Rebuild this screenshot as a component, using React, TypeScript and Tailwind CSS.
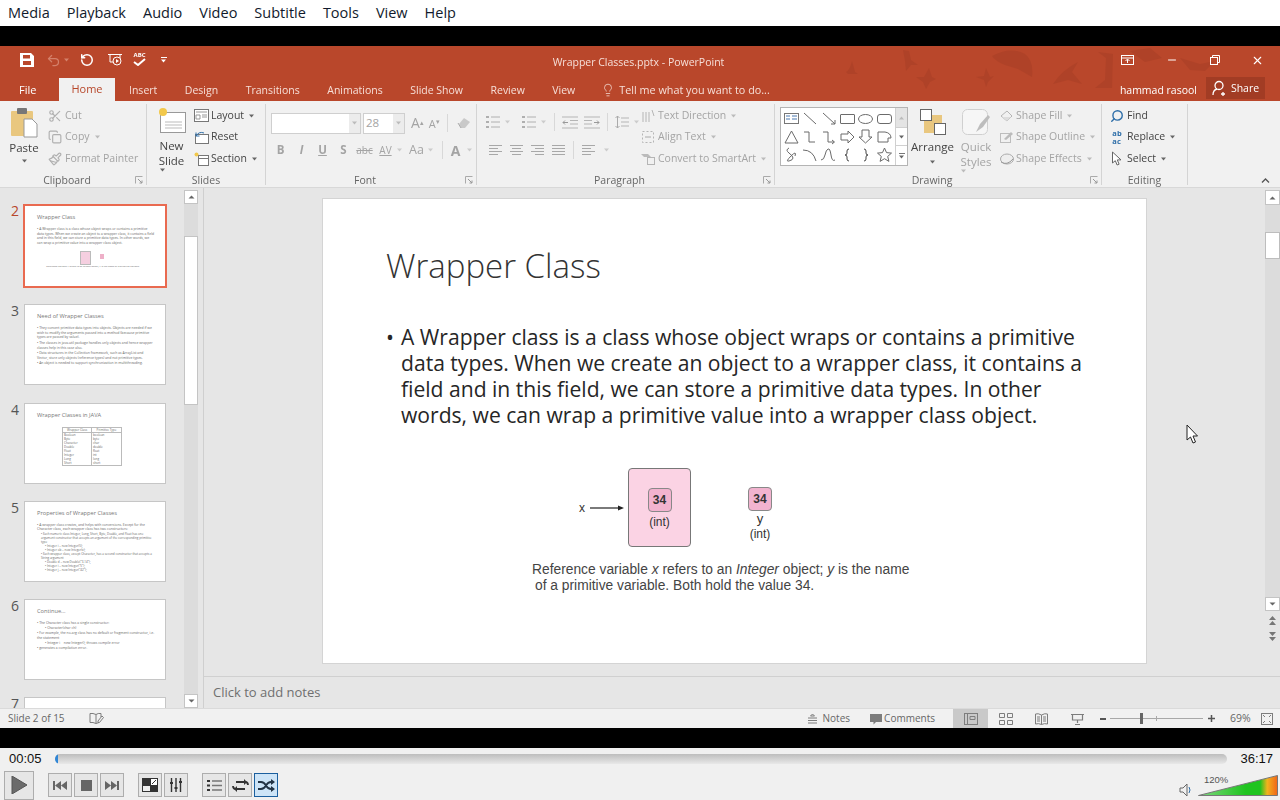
import type { ReactNode } from 'react';
import { Copy, Lightbulb, Paintbrush, RotateCcw, Scissors, Undo2, X, Minus, Search } from 'lucide-react';

const segoe = '[font-family:"Open_Sans","Noto_Sans",sans-serif]';

function Svg({ w, h, children, className = '' }: { w: number; h: number; children: ReactNode; className?: string }) {
    return (
        <svg width={w} height={h} viewBox={`0 0 ${w} ${h}`} fill="none" className={`shrink-0 ${className}`}>
            {children}
        </svg>
    );
}

function Caret({ color = '#888' }: { color?: string }) {
    return (
        <Svg w={7} h={4}>
            <path d="M1 0.5h5L3.5 3.5z" fill={color} />
        </Svg>
    );
}

function Launcher() {
    return (
        <Svg w={8} h={8} className="absolute right-[3px] top-[1px]">
            <path d="M0.5 7.5V0.5H7.5" stroke="#aaa" />
            <path d="M3 3l4 4M7 4.5V7H4.5" stroke="#999" />
        </Svg>
    );
}

function Group({ className, label, launcher, children }: { className: string; label: string; launcher?: boolean; children: ReactNode }) {
    return (
        <div className={`flex flex-col shrink-0 h-[81px] border-r border-[#d4d4d4] ${className}`}>
            <div className="flex-1 min-h-0 relative flex">{children}</div>
            <div className={`relative h-[10px] flex items-center justify-center text-[10.5px] leading-none text-[#666] ${launcher ? 'pr-[12px]' : ''}`}>
                {label}
                {launcher && <Launcher />}
            </div>
        </div>
    );
}

function SmallRow({ icon, label, caret, dim = true }: { icon: ReactNode; label: string; caret?: boolean; dim?: boolean }) {
    return (
        <div className={`flex items-center gap-[2px] h-[21.5px] text-[10.5px] whitespace-nowrap ${dim ? 'text-[#a4a4a4]' : 'text-[#444]'}`}>
            <span className="w-[16px] h-[16px] flex items-center justify-center">{icon}</span>
            {label}
            {caret && <span className="ml-[2px]"><Caret color={dim ? '#bbb' : '#666'} /></span>}
        </div>
    );
}

function Lines({ w = 14, rows = 4, color = '#a8a8a8', align = 'left' }: { w?: number; rows?: number; color?: string; align?: 'left' | 'center' | 'right' | 'full' }) {
    const ys = Array.from({ length: rows }, (_, i) => 1.5 + i * 3);
    return (
        <Svg w={w} h={rows * 3}>
            {ys.map((y, i) => {
                const short = align !== 'full' && i % 2 === 1 ? 4 : 0;
                const x1 = align === 'center' ? short / 2 : align === 'right' ? short : 0;
                return <path key={y} d={`M${x1} ${y}H${x1 + w - short}`} stroke={color} />;
            })}
        </Svg>
    );
}

function ListIcon() {
    return (
        <Svg w={14} h={14}>
            <path d="M0 2h3M0 7h3M0 12h3" stroke="#999" strokeWidth="1.500" />
            <path d="M5 2h9M5 7h9M5 12h9" stroke="#b0b0b0" />
        </Svg>
    );
}

function IndentIcon({ flip }: { flip?: boolean }) {
    return (
        <Svg w={16} h={13} className={flip ? '-scale-x-100' : ''}>
            <path d="M0 1h16M8 4.500h8M8 8h8M0 12h16" stroke="#b5b5b5" />
            <path d="M1 6.500h5M3 4.500l-2 2 2 2" stroke="#999" />
        </Svg>
    );
}

function FontRibbon() {
    const row2 = ['B', 'I', 'U', 'S', 'abc'];
    return (
        <div className="flex flex-col text-[#a4a4a4] pl-[5px] pt-[8px]">
            <div className="flex items-center h-[22px]">
                <div className="w-[90px] h-[21px] bg-white border border-[#cfcfcf] flex justify-end">
                    <div className="w-[11px] bg-[#ececec] flex items-center justify-center"><Caret color="#bbb" /></div>
                </div>
                <div className="ml-[2px] w-[42px] h-[21px] bg-white border border-[#cfcfcf] flex justify-between items-center pl-[2px] text-[11.5px]">
                    28
                    <div className="w-[11px] h-full bg-[#ececec] flex items-center justify-center"><Caret color="#bbb" /></div>
                </div>
                <span className="ml-[6px] text-[14px] leading-none">A<sup className="text-[7px]">▴</sup></span>
                <span className="ml-[5px] text-[11px] leading-none">A<sup className="text-[7px]">▾</sup></span>
                <div className="w-px h-[18px] bg-[#d8d8d8] ml-[7px]" />
                <Svg w={16} h={14} className="ml-[8px]">
                    <path d="M3 8l5-6 6 4-5 6H5z" fill="#c9c9c9" />
                    <path d="M2 7l3 5" stroke="#aaa" />
                </Svg>
            </div>
            <div className="flex items-center h-[22px] mt-[5px] text-[11.5px] font-bold -ml-[1px]">
                {row2.map((t) => (
                    <span key={t} className={`w-[21px] text-center ${t === 'I' ? 'italic' : ''} ${t === 'U' ? 'underline' : ''} ${t === 'abc' ? 'line-through font-normal text-[10px]' : ''}`}>{t}</span>
                ))}
                <span className="w-[21px] text-center font-normal text-[10px] underline">AV</span>
                <Caret color="#ccc" />
                <span className="ml-[6px] font-normal text-[12.5px]">Aa</span>
                <span className="ml-[3px]"><Caret color="#ccc" /></span>
                <div className="w-px h-[18px] bg-[#d8d8d8] ml-[8px]" />
                <span className="ml-[8px] text-[14px]">A</span>
                <span className="ml-[5px]"><Caret color="#ccc" /></span>
            </div>
        </div>
    );
}

function ParagraphRibbon() {
    return (
        <div className="flex pl-[9px] pt-[7px]">
            <div className="flex flex-col w-[154px] shrink-0">
                <div className="flex items-center h-[22px] gap-[4px]">
                    <ListIcon />
                    <Caret color="#ccc" />
                    <span className="ml-[7px]"><ListIcon /></span>
                    <Caret color="#ccc" />
                    <div className="w-px h-[18px] bg-[#d8d8d8] mx-[3px]" />
                    <IndentIcon />
                    <span className="ml-[2px]"><IndentIcon flip /></span>
                    <div className="w-px h-[18px] bg-[#d8d8d8] mx-[3px]" />
                    <Svg w={14} h={14}>
                        <path d="M2.500 1v12M.5 3l2-2 2 2M.5 11l2 2 2-2" stroke="#aaa" />
                        <path d="M6 3h8M6 7h8M6 11h8" stroke="#b5b5b5" />
                    </Svg>
                    <Caret color="#ccc" />
                </div>
                <div className="flex items-center h-[22px] mt-[6px] gap-[8px] pl-[3px]">
                    <Lines w={13} align="left" />
                    <Lines w={13} align="center" />
                    <Lines w={13} align="right" />
                    <Lines w={13} align="full" />
                    <div className="w-px h-[18px] bg-[#d8d8d8]" />
                    <Lines w={13} />
                    <Caret color="#ccc" />
                </div>
            </div>
            <div className="flex flex-col -mt-[6px]">
                <SmallRow icon={<Svg w={14} h={14}><path d="M2 3v10M5 3v10M8 3v10M11 1l2 6" stroke="#b5b5b5" /></Svg>} label="Text Direction" caret />
                <SmallRow icon={<Svg w={14} h={14}><rect x="1.500" y="1.500" width="11" height="11" stroke="#b5b5b5" strokeDasharray="2 2" /><path d="M4 7h6" stroke="#aaa" /></Svg>} label="Align Text" caret />
                <SmallRow icon={<Svg w={16} h={14}><path d="M1 2h7l3 3H4z" fill="#bbb" /><rect x="7.500" y="5.500" width="7" height="7" stroke="#b5b5b5" /></Svg>} label="Convert to SmartArt" caret />
            </div>
        </div>
    );
}

function ShapeIcon({ n }: { n: number }) {
    const s = '#6b6b6b';
    const shapes: ReactNode[] = [
        <g key="a"><rect x="1.500" y="3.500" width="14" height="10" stroke="#777" /><path d="M3 6h4M3 9h4M9 6h5M9 9h5" stroke="#4a78b0" /></g>,
        <path key="b" d="M3 3l12 11" stroke={s} />,
        <path key="c" d="M3 3l12 11M15 10v4h-4" stroke={s} />,
        <rect key="d" x="1.500" y="4.500" width="14" height="9" rx="0.5" stroke={s} />,
        <ellipse key="e" cx="8.500" cy="9" rx="7" ry="4.500" stroke={s} />,
        <rect key="f" x="1.500" y="4.500" width="14" height="9" rx="2.500" stroke={s} />,
        <path key="g" d="M8.500 3L15 15H2z" stroke={s} />,
        <path key="h" d="M3 4h5v10h6" stroke={s} />,
        <path key="i" d="M3 4h5v10h6M12 12l2.500 2-2.500 2" stroke={s} />,
        <path key="j" d="M2 6h7V3l6 6-6 6v-3H2z" stroke={s} />,
        <path key="k" d="M5 2h7v7h3l-6.500 6L2 9h3z" stroke={s} />,
        <path key="l" d="M2 14V4h7q6 1 6 6h-3v4z" stroke={s} />,
        <path key="m" d="M6 2q-4 2 0 5t4 5-4 3 2-5 4 0" stroke={s} />,
        <path key="n" d="M2 4q10 0 13 11" stroke={s} />,
        <path key="o" d="M1 14q3 0 4-5t3-6 3 6 4 5" stroke={s} />,
        <path key="p" d="M10 3q-2 0-2 2v2q0 2-2 2 2 0 2 2v2q0 2 2 2" stroke="#444" />,
        <path key="q" d="M7 3q2 0 2 2v2q0 2 2 2-2 0-2 2v2q0 2-2 2" stroke="#444" />,
        <path key="r" d="M8.500 2l2 4.600 5 .5-3.800 3.300 1.200 5-4.400-2.700-4.400 2.700 1.200-5L1.500 7.100l5-.5z" stroke={s} />,
    ];
    return <Svg w={17} h={17}>{shapes[n]}</Svg>;
}

function DrawingRibbon() {
    return (
        <div className="flex pl-[5px] pt-[3px]">
            <div className="w-[128px] h-[59px] bg-white border border-[#b4b4b4] flex shrink-0">
                <div className="grid grid-cols-6 flex-1 items-center justify-items-center px-[1px] py-[1px]">
                    {Array.from({ length: 18 }, (_, i) => <ShapeIcon key={i} n={i} />)}
                </div>
                <div className="w-[12px] flex flex-col border-l border-[#d0d0d0]">
                    <div className="h-[19px] bg-[#e4e4e4] flex items-center justify-center"><Svg w={7} h={4}><path d="M1 3.500h5L3.500 .5z" fill="#bbb" /></Svg></div>
                    <div className="h-[19px] flex items-center justify-center border-y border-[#d0d0d0]"><Caret color="#666" /></div>
                    <div className="flex-1 flex flex-col gap-[1px] items-center justify-center"><div className="w-[6px] h-px bg-[#777]" /><Caret color="#666" /></div>
                </div>
            </div>
            <div className="w-[48px] flex flex-col items-center text-[11.5px] leading-[15px] text-[#444] pl-[1px]">
                <Svg w={28} h={28} className="mt-[1px]">
                    <rect x="5" y="7" width="18" height="18" fill="#e9c77f" />
                    <rect x="1.500" y="1.500" width="11" height="11" fill="#fff" stroke="#666" />
                    <rect x="15.500" y="15.500" width="11" height="11" fill="#fff" stroke="#666" />
                </Svg>
                <span className="mt-[3px]">Arrange</span>
                <span className="mt-[6px]"><Caret color="#666" /></span>
            </div>
            <div className="w-[40px] flex flex-col items-center text-[11.5px] leading-[15px] text-[#a4a4a4]">
                <Svg w={30} h={28} className="mt-[1px]">
                    <rect x="1.500" y="1.500" width="25" height="25" rx="5" stroke="#d0d0d0" fill="#f6f6f6" />
                    <path d="M15 24l4-8 8-9 2 2-7 10z" fill="#bdbdbd" />
                </Svg>
                <span className="mt-[3px]">Quick</span>
                <span className="whitespace-nowrap">Styles <Caret color="#bbb" /></span>
            </div>
            <div className="flex flex-col -mt-[2px] ml-[2px]">
                <SmallRow icon={<Svg w={15} h={14}><path d="M2 7l6-5 5 5-5 5z" stroke="#b5b5b5" /><path d="M3 8h9l-4 4z" fill="#ddd" /></Svg>} label="Shape Fill" caret />
                <SmallRow icon={<Svg w={15} h={14}><rect x="1.500" y="3.500" width="10" height="9" stroke="#bdbdbd" /><path d="M5 9l7-7 2 2-7 6z" fill="#bbb" /></Svg>} label="Shape Outline" caret />
                <SmallRow icon={<Svg w={15} h={14}><ellipse cx="8" cy="7" rx="6.500" ry="5" fill="#eee" stroke="#aaa" /><path d="M2 10q6 4 12-3" stroke="#999" /></Svg>} label="Shape Effects" caret />
            </div>
        </div>
    );
}

function EditingRibbon() {
    return (
        <div className="flex flex-col pl-[7px] pt-[1px]">
            <SmallRow dim={false} icon={<Search size={14} color="#2e6ea8" strokeWidth={2.4} className="-scale-x-100" />} label="Find" />
            <SmallRow
                dim={false}
                icon={<span className="text-[7.500px] leading-[8px] font-bold text-[#2e6ea8]">ab<br />ac</span>}
                label="Replace"
                caret
            />
            <SmallRow
                dim={false}
                icon={<Svg w={12} h={15}><path d="M1.500 1v11l2.800-2.300 1.800 4.300 2-.8-1.800-4.300h3.700z" stroke="#666" fill="#fff" /></Svg>}
                label="Select"
                caret
            />
        </div>
    );
}

function Birds() {
    const blobs = [
        'M846 26Q850 24 852 15Q854 22 855 26L858 28H848Z',
        'M903 4L909 5L911 14L918 19L911 19L906 25L905 15Z',
        'M916 31L924 31L929 22L932 31L936 33L930 36L926 43L923 36Z',
        'M976 31L984 30L986 22L990 31L994 30L988 36L986 41L984 34Z',
        'M992 10Q1010 0 1025 8Q1034 15 1032 31L1018 23L1005 19Q995 15 992 10Z',
        'M1053 38Q1062 24 1078 16L1072 26L1082 38L1068 34Z',
        'M1095 42L1105 34L1106 12L1098 6L1113 8L1112 42Z',
        'M1180 12L1200 18L1215 15L1205 25L1190 24Z',
        'M1130 5L1150 2L1162 12L1145 16Z',
    ];
    return (
        <svg className="absolute inset-0 pointer-events-none" width="1280" height="55">
            {blobs.map((d) => <path key={d} d={d} fill="#a83f26" opacity="0.6" />)}
        </svg>
    );
}

function TitleBar() {
    const tabs = ['Insert', 'Design', 'Transitions', 'Animations', 'Slide Show', 'Review', 'View'];
    return (
        <div className="relative h-[55px] bg-[#b9472b] text-[#f6dfd8]">
            <Birds />
            <div className="relative h-[32px] flex items-center">
                <Svg w={14} h={14} className="ml-[20px] mb-[4px]">
                    <path fillRule="evenodd" d="M0 0h11l3 3v11H0zM3 2v3.500h7V2zM3 8v4h8V8z" fill="#fff" />
                </Svg>
                <Undo2 size={15} color="#d4816b" className="ml-[12px] mb-[4px]" />
                <span className="ml-[2px] mb-[4px]"><Caret color="#d4816b" /></span>
                <RotateCcw size={14} color="#fff" strokeWidth={2.6} className="ml-[10px] mb-[4px]" />
                <Svg w={16} h={16} className="ml-[13px] mb-[4px]">
                    <path d="M1 2.500h14M3 3v7h10V3" stroke="#fff" />
                    <circle cx="10" cy="9" r="4" stroke="#fff" fill="#b7462b" />
                    <path d="M9 7l3 2-3 2z" fill="#fff" />
                </Svg>
                <span className="ml-[10px] mb-[6px] flex flex-col items-center text-[6px] leading-[6px] font-bold text-white">
                    ABC
                    <Svg w={13} h={8}><path d="M1 4l4 3 7-6" stroke="#fff" strokeWidth="2" /></Svg>
                </span>
                <span className="ml-[14px] mb-[4px] flex flex-col items-center gap-[1px]">
                    <span className="w-[6px] h-px bg-white" />
                    <Caret color="#fff" />
                </span>
                <span className="flex-1 text-center text-[10.5px] pr-[11px] pt-[2px]">Wrapper Classes.pptx - PowerPoint</span>
                <Svg w={13} h={10} className="mr-[32px] mb-[4px]">
                    <rect x=".5" y=".5" width="12" height="9" stroke="#fff" />
                    <path d="M.5 3h12M6.500 8V4.500M4.500 6l2-2 2 2" stroke="#fff" />
                </Svg>
                <Minus size={12} color="#fff" className="mr-[32px] mb-[4px]" />
                <Svg w={10} h={10} className="mr-[31px] mb-[4px]">
                    <rect x=".5" y="2.500" width="7" height="7" stroke="#fff" />
                    <path d="M2.500 2V.5h7v7H8" stroke="#fff" />
                </Svg>
                <X size={13} color="#fff" className="mr-[16px] mb-[4px]" />
            </div>
            <div className="relative h-[23px] flex items-end text-[10.5px] leading-[22px]">
                <span className="w-[59px] pl-[19px] text-white text-[11px]">File</span>
                <span className="w-[56px] h-[23px] bg-[#f1f1f1] text-[#b7472a] text-center text-[11px]">Home</span>
                <div className="ml-[14px] flex gap-[27.500px]">
                    {tabs.map((t) => <span key={t}>{t}</span>)}
                </div>
                <Lightbulb size={14} strokeWidth={1.3} className="ml-[26px] mb-[4px]" />
                <span className="ml-[4px] text-[10.8px]">Tell me what you want to do...</span>
                <span className="ml-auto text-white">hammad rasool</span>
                <span className="ml-[9px] mr-[15px] w-[59px] h-[22px] bg-[#a23c24] flex items-center justify-center gap-[3px] text-white mb-[2px]">
                    <Svg w={16} h={16}>
                        <circle cx="7" cy="5.500" r="4" stroke="#fff" strokeWidth="1.300" />
                        <path d="M1 15q0-5 4-6M11 12v4M9 14h4" stroke="#fff" strokeWidth="1.300" />
                    </Svg>
                    Share
                </span>
            </div>
        </div>
    );
}

function Ribbon() {
    return (
        <div className="relative h-[87px] bg-[#f1f1f1] border-b border-[#d8d8d8] flex items-start pt-[3px]">
            <Group className="w-[147px]" label="Clipboard" launcher>
                <div className="w-[47px] flex flex-col items-center pt-[4px] pl-[1px] text-[11.5px] text-[#444]">
                    <Svg w={28} h={30}>
                        <rect x="1" y="3" width="22" height="25" rx="1" fill="#e9c77f" />
                        <rect x="7" y="0" width="10" height="6" rx="1" fill="#777" />
                        <path d="M14 11h8l5 5v13H14z" fill="#fff" stroke="#999" />
                    </Svg>
                    <span className="mt-[2px] leading-[15px]">Paste</span>
                    <span className="mt-[4px]"><Caret color="#666" /></span>
                </div>
                <div className="flex flex-col pt-[1px]">
                    <SmallRow icon={<Scissors size={14} color="#b0b0b0" />} label="Cut" />
                    <SmallRow icon={<Copy size={14} color="#b0b0b0" />} label="Copy" caret />
                    <SmallRow icon={<Paintbrush size={14} color="#b0b0b0" />} label="Format Painter" />
                </div>
            </Group>
            <Group className="w-[119px]" label="Slides">
                <div className="w-[46px] flex flex-col items-center pt-[3px] text-[11.5px] leading-[15px] text-[#444] pl-[3px]">
                    <Svg w={28} h={26}>
                        <rect x="2.500" y="5.500" width="25" height="20" fill="#fff" stroke="#999" />
                        <path d="M7 15h17M7 18h17M7 21h17" stroke="#bbb" />
                        <circle cx="5" cy="5" r="4" fill="#f2c84b" />
                    </Svg>
                    <span className="mt-[5px]">New</span>
                    <span className="whitespace-nowrap">Slide <Caret color="#666" /></span>
                </div>
                <div className="flex flex-col pt-[1px]">
                    <SmallRow dim={false} icon={<Svg w={15} h={13}><rect x=".5" y=".5" width="14" height="12" fill="#fff" stroke="#777" /><path d="M2 3h11M2 6h4v4H2zM8 6h5M8 8h5" stroke="#999" /></Svg>} label="Layout" caret />
                    <SmallRow dim={false} icon={<Svg w={15} h={13}><rect x="1.500" y="3.500" width="13" height="9" fill="#fff" stroke="#777" /><path d="M2 5q3-5 8-3M2 1.500V5h3.500" stroke="#2e6ea8" /></Svg>} label="Reset" />
                    <SmallRow dim={false} icon={<Svg w={15} h={14}><rect x="4.500" y="3.500" width="10" height="10" fill="#fff" stroke="#777" /><path d="M4.500 6.500h10" stroke="#777" /><circle cx="2.500" cy="2.500" r="2" fill="#f2c84b" /></Svg>} label="Section" caret />
                </div>
            </Group>
            <Group className="w-[211px]" label="Font" launcher><FontRibbon /></Group>
            <Group className="w-[298px]" label="Paragraph" launcher><ParagraphRibbon /></Group>
            <Group className="w-[327px]" label="Drawing" launcher><DrawingRibbon /></Group>
            <Group className="w-[86px]" label="Editing"><EditingRibbon /></Group>
            <Svg w={9} h={5} className="absolute right-[10px] bottom-[4px]">
                <path d="M1 4.500l3.500-3.500 3.500 3.500" stroke="#555" strokeWidth="1.300" />
            </Svg>
        </div>
    );
}

function ArrowBtn({ up, className = '' }: { up?: boolean; className?: string }) {
    return (
        <div className={`bg-white border border-[#c4c4c4] flex items-center justify-center ${className}`}>
            <Svg w={7} h={4}><path d={up ? 'M0.500 3.500h6L3.500 .5z' : 'M0.500 .5h6L3.500 3.500z'} fill="#666" /></Svg>
        </div>
    );
}

function Tiny({ title, children }: { title: string; children: ReactNode }) {
    return (
        <div className="h-full pl-[12px] pr-[10px] pt-[7px] text-[#666] [font-family:'Open_Sans',sans-serif]">
            <div className="text-[5.700px] leading-[8px] text-[#777]">{title}</div>
            <div className="mt-[6px] text-[3.400px] leading-[4.600px]">{children}</div>
        </div>
    );
}

function Thumb({ n, selected, children }: { n: number; selected?: boolean; children?: ReactNode }) {
    return (
        <div className={`flex items-start shrink-0 ${selected ? '-mb-[1px]' : ''}`}>
            <span className={`w-[24px] pl-[11px] text-[14px] leading-[15px] -mt-[1px] ${selected ? 'text-[#b7472a]' : 'text-[#555]'}`}>{n}</span>
            {selected ? (
                <div className="-ml-[1px] w-[144px] h-[84px] bg-white border-[2.500px] border-[#e96a50] overflow-hidden">{children}</div>
            ) : (
                <div className="w-[142px] h-[81px] bg-white border border-[#c6c6c6] overflow-hidden">{children}</div>
            )}
        </div>
    );
}

function ThumbList() {
    const rows = [['Boolean', 'boolean'], ['Byte', 'byte'], ['Character', 'char'], ['Double', 'double'], ['Float', 'float'], ['Integer', 'int'], ['Long', 'long'], ['Short', 'short']];
    return (
        <div className="flex-1 flex flex-col gap-[17.300px] pt-[16px] overflow-hidden">
            <Thumb n={2} selected>
                <Tiny title="Wrapper Class">
                    <p>• A Wrapper class is a class whose object wraps or contains a primitive data types. When we create an object to a wrapper class, it contains a field and in this field, we can store a primitive data types. In other words, we can wrap a primitive value into a wrapper class object.</p>
                    <div className="flex justify-center items-start gap-[9px] mt-[6px] pr-[8px]">
                        <div className="w-[11px] h-[14px] bg-[#f5cfe0] border-[0.5px] border-[#bbb]" />
                        <div className="w-[4px] h-[5px] mt-[3px] bg-[#eeb0c8]" />
                    </div>
                    <p className="text-center text-[2.400px] leading-[3px] pr-[6px]">Reference variable x refers to an Integer object; y is the name of a primitive variable.</p>
                </Tiny>
            </Thumb>
            <Thumb n={3}>
                <Tiny title="Need of Wrapper Classes">
                    <p>• They convert primitive data types into objects. Objects are needed if we wish to modify the arguments passed into a method (because primitive types are passed by value).</p>
                    <p className="mt-[1px]">• The classes in java.util package handles only objects and hence wrapper classes help in this case also.</p>
                    <p className="mt-[1px]">• Data structures in the Collection framework, such as ArrayList and Vector, store only objects (reference types) and not primitive types.</p>
                    <p className="mt-[1px]">• An object is needed to support synchronization in multithreading.</p>
                </Tiny>
            </Thumb>
            <Thumb n={4}>
                <Tiny title="Wrapper Classes in JAVA">
                    <div className="ml-[25px] mt-[8px] w-[60px] border-[0.5px] border-[#bbb] grid grid-cols-2 text-center leading-[4.100px] text-[3px]">
                        <div className="border-b-[0.5px] border-r-[0.5px] border-[#bbb]">Wrapper Class</div>
                        <div className="border-b-[0.5px] border-[#bbb]">Primitive Type</div>
                        <div className="text-left pl-[1px] border-r-[0.5px] border-[#bbb]">{rows.map(([a]) => <div key={a}>{a}</div>)}</div>
                        <div className="text-left pl-[1px]">{rows.map(([, b]) => <div key={b}>{b}</div>)}</div>
                    </div>
                </Tiny>
            </Thumb>
            <Thumb n={5}>
                <Tiny title="Properties of Wrapper Classes">
                    <p>• A wrapper class creates, and helps with conversions. Except for the Character class, each wrapper class has two constructors:</p>
                    <div className="pl-[4px] text-[3px] leading-[4px]">
                        <p>• Each numeric class Integer, Long, Short, Byte, Double, and Float has one argument constructor that accepts an argument of the corresponding primitive type</p>
                        <p className="pl-[4px]">• Integer i = new Integer(5);<br />• Integer ob = new Integer(x);</p>
                        <p>• Each wrapper class, except Character, has a second constructor that accepts a String argument</p>
                        <p className="pl-[4px]">• Double d = new Double("3.14");<br />• Integer i = new Integer("5");<br />• Integer j = new Integer("42");</p>
                    </div>
                </Tiny>
            </Thumb>
            <Thumb n={6}>
                <Tiny title="Continue...">
                    <p>• The Character class has a single constructor:</p>
                    <p className="pl-[8px]">• Character(char ch)</p>
                    <p className="mt-[1px]">• For example, the no-arg class has no default or fragment constructor, i.e. the statement</p>
                    <p className="pl-[8px]">• Integer i = new Integer(); throws compile error</p>
                    <p className="mt-[1px]">• generates a compilation error.</p>
                </Tiny>
            </Thumb>
            <Thumb n={7}><div /></Thumb>
        </div>
    );
}

function ThumbPanel() {
    return (
        <div className="w-[204px] shrink-0 flex border-r border-[#cfcfcf] bg-[#e6e6e6]">
            <ThumbList />
            <div className="w-[14px] mr-[5px] mt-[2px] bg-[#dcdcdc] flex flex-col justify-between relative">
                <ArrowBtn up className="h-[14px]" />
                <div className="absolute left-0 top-[46px] w-[14px] h-[169px] bg-white border border-[#c4c4c4]" />
                <ArrowBtn className="h-[14px]" />
            </div>
        </div>
    );
}

function Diagram() {
    return (
        <div className="flex flex-col [font-family:'Liberation_Sans',Arial,sans-serif] text-[#333]">
            <div className="flex items-start ml-[47px] h-[79px]">
                <span className="text-[12px] mt-[31px] w-[11px]">x</span>
                <Svg w={35} h={8} className="mt-[36px]">
                    <path d="M0 4h30" stroke="#222" strokeWidth="1.200" />
                    <path d="M34 4l-6-2.500v5z" fill="#222" />
                </Svg>
                <div className="ml-[3px] w-[63px] h-[79px] rounded-[4px] bg-[#fbd3e4] border border-[#777] flex flex-col items-center pt-[19px]">
                    <div className="w-[24px] h-[24px] rounded-[4px] bg-[#f2b3cf] border border-[#888] flex items-center justify-center text-[12px] font-bold">34</div>
                    <span className="text-[12px] leading-[20px]">(int)</span>
                </div>
                <div className="ml-[57px] mt-[19px] flex flex-col items-center">
                    <div className="w-[24px] h-[24px] rounded-[4px] bg-[#f2b3cf] border border-[#888] flex items-center justify-center text-[12px] font-bold">34</div>
                    <span className="text-[13px] leading-[15px]">y</span>
                    <span className="text-[12px] leading-[16px]">(int)</span>
                </div>
            </div>
            <p className="mt-[15px] text-[13.800px] leading-[16px] whitespace-nowrap text-[#444]">
                Reference variable <i>x</i> refers to an <i>Integer</i> object; <i>y</i> is the name
                <br />
                <span className="ml-[3px]">of a primitive variable. Both hold the value 34.</span>
            </p>
        </div>
    );
}

function Slide() {
    return (
        <div className="w-[825px] h-[466px] bg-white border border-[#d4d4d4] pl-[63px] pt-[44px] text-[#222] [font-family:'Open_Sans',sans-serif]">
            <h1 className="text-[33px] leading-[45px] font-light text-[#333]">Wrapper Class</h1>
            <div className="flex mt-[36px] text-[21.100px] leading-[26px] text-[#262626]">
                <span className="w-[15px] shrink-0">•</span>
                <p className="w-[690px]">
                    A Wrapper class is a class whose object wraps or contains a primitive data types. When we create an object to a wrapper class, it contains a field and in this field, we can store a primitive data types. In other words, we can wrap a primitive value into a wrapper class object.
                </p>
            </div>
            <div className="mt-[40px] ml-[146px]"><Diagram /></div>
        </div>
    );
}

function SlideArea() {
    return (
        <div className="flex-1 flex flex-col min-w-0 bg-[#e6e6e6]">
            <div className="flex-1 flex min-h-0">
                <div className="flex-1 pl-[118px] pt-[10px]"><Slide /></div>
                <div className="w-[15px] mr-0 pt-[2px] flex flex-col items-center">
                    <div className="w-[15px] h-[421px] bg-[#dcdcdc] flex flex-col justify-between relative">
                        <ArrowBtn up className="h-[15px]" />
                        <div className="absolute left-0 top-[42px] w-[15px] h-[27px] bg-white border border-[#bdbdbd]" />
                        <ArrowBtn className="h-[14px]" />
                    </div>
                    <Svg w={9} h={11} className="mt-[4px]"><path d="M1 5h7L4.500 1zM1 10h7L4.500 6z" fill="#777" /></Svg>
                    <Svg w={9} h={11} className="mt-[5px]"><path d="M1 1h7L4.500 5zM1 6h7L4.500 10z" fill="#777" /></Svg>
                </div>
            </div>
            <div className="h-[32px] shrink-0 border-t border-[#d0d0d0] pl-[9px] flex items-center text-[13px] text-[#6f6f6f]">Click to add notes</div>
        </div>
    );
}

function StatusBar() {
    const g = '#7d7d7d';
    return (
        <div className="h-[20px] bg-[#f1f1f1] border-t border-[#dadada] flex items-center text-[10px] text-[#666]">
            <span className="ml-[8px]">Slide 2 of 15</span>
            <Svg w={15} h={13} className="ml-[24px]">
                <path d="M7 2.500Q4 1 1 1.500v9Q4 10 7 11.500V2.500ZM7 2.500Q9 1 12 1.500V5M7 11.500l3-1" stroke={g} />
                <path d="M9 9l4-5 1.500 1.500-4 5H9z" stroke={g} />
            </Svg>
            <div className="ml-auto flex items-center h-full">
                <Svg w={11} h={11} className="mr-[5px]"><path d="M5.500 1l2 2h-4zM1 5h9M1 7.500h9M1 10h9" stroke={g} /></Svg>
                <span className="mr-[20px]">Notes</span>
                <Svg w={12} h={12} className="mr-[2px]"><path d="M0 1h12v8H6L3.500 11.500V9H0z" fill={g} /></Svg>
                <span className="mr-[18px]">Comments</span>
                <div className="w-[35px] h-full bg-[#c9c9c9] flex items-center justify-center">
                    <Svg w={14} h={12}><rect x=".5" y=".5" width="13" height="11" stroke={g} /><path d="M3.500 1v10M6 3.500h5v3H6z" stroke={g} /></Svg>
                </div>
                <div className="w-[36px] flex justify-center">
                    <Svg w={14} h={12}><path d="M.5.5h5v4h-5zM8.500.5h5v4h-5zM.5 7.500h5v4h-5zM8.500 7.500h5v4h-5z" stroke={g} /></Svg>
                </div>
                <div className="w-[35px] flex justify-center">
                    <Svg w={13} h={12}><path d="M6.500 2Q3 0 .5 1v10q3-1 6 .5 3-1.500 6-.5V1Q10 0 6.500 2zM6.500 2v9.500M2 4h3M2 6h3M2 8h3M8 4h3M8 6h3M8 8h3" stroke={g} /></Svg>
                </div>
                <div className="w-[36px] flex justify-center">
                    <Svg w={13} h={12}><path d="M0 1.500h13M1.500 2v5h10V2M6.500 7v3M4 11.500h5" stroke={g} strokeWidth="1.200" /></Svg>
                </div>
                <span className="w-[6px] h-[2px] bg-[#555] ml-[5px]" />
                <div className="relative w-[93px] h-px bg-[#a8a8a8] mx-[4px]">
                    <div className="absolute left-[30px] -top-[5px] w-[3px] h-[11px] bg-[#666]" />
                    <div className="absolute left-[46px] -top-[2px] w-px h-[5px] bg-[#aaa]" />
                </div>
                <Svg w={9} h={9}><path d="M4.500 1v7M1 4.500h7" stroke="#555" strokeWidth="1.500" /></Svg>
                <span className="ml-[14px] w-[26px] text-[10.500px]">69%</span>
                <Svg w={12} h={12} className="ml-[5px] mr-[7px]"><rect x=".5" y=".5" width="11" height="11" stroke={g} /><path d="M2 2l2 2M10 2L8 4M2 10l2-2M10 10L8 8" stroke={g} /></Svg>
            </div>
        </div>
    );
}

function Cursor() {
    return (
        <Svg w={13} h={20} className="absolute left-[1186px] top-[378px]">
            <path d="M1 1v15l3.500-3 2.500 6 2.500-1-2.500-6h4.500z" fill="#fff" stroke="#222" />
        </Svg>
    );
}

function PptWindow() {
    return (
        <div className={`relative h-[682px] flex flex-col overflow-hidden blur-[0.4px] ${segoe}`}>
            <TitleBar />
            <Ribbon />
            <div className="h-[520px] flex">
                <ThumbPanel />
                <SlideArea />
            </div>
            <StatusBar />
            <Cursor />
        </div>
    );
}

function VBtn({ active, className = 'w-[24px] h-[24px]', children }: { active?: boolean; className?: string; children: ReactNode }) {
    return (
        <div className={`flex items-center justify-center border ${active ? 'border-[#1b5f9e] bg-[#cde4f7]' : 'border-[#adadad] bg-[#e6e6e6]'} ${className}`}>
            {children}
        </div>
    );
}

function Player() {
    const d = '#666';
    return (
        <div className="h-[52px] bg-[#f0f0f0] flex flex-col [font-family:'Liberation_Sans',Arial,sans-serif]">
            <div className="h-[22px] flex items-center text-[13px] text-[#111]">
                <span className="ml-[9px] w-[46px]">00:05</span>
                <div className="flex-1 h-[10px] rounded-full bg-gradient-to-b from-[#bdbdbd] to-[#e8e8e8] overflow-hidden">
                    <div className="w-[3px] h-full bg-[#2f86d6]" />
                </div>
                <span className="ml-[13px] mr-[7px]">36:17</span>
            </div>
            <div className="h-[30px] flex items-center pl-[4px]">
                <VBtn className="w-[30px] h-[29px]"><Svg w={16} h={18}><path d="M1 0l15 9-15 9z" fill="#6b6b6b" stroke="#555" /></Svg></VBtn>
                <div className="ml-[14px] flex gap-[2px]">
                    <VBtn><Svg w={14} h={9}><path d="M0 0h2v9H0zM8 0v9L2 4.500zM14 0v9L8 4.500z" fill={d} /></Svg></VBtn>
                    <VBtn><div className="w-[11px] h-[11px] bg-[#666]" /></VBtn>
                    <VBtn><Svg w={14} h={9}><path d="M14 0h-2v9h2zM6 0v9l6-4.500zM0 0v9l6-4.500z" fill={d} /></Svg></VBtn>
                </div>
                <div className="ml-[14px] flex gap-[2px]">
                    <VBtn><Svg w={16} h={14}><rect width="16" height="14" fill="#333" /><rect x="1" y="8" width="7" height="5" fill="#eee" /><rect x="9" y="1" width="6" height="6" fill="#fff" /><path d="M10 6l4-4" stroke="#333" /></Svg></VBtn>
                    <VBtn><Svg w={14} h={14}><path d="M2.500 0v14M7 0v14M11.500 0v14" stroke="#333" strokeWidth="1.400" /><path d="M1 4h3v2H1zM5.500 9h3v2h-3zM10 3h3v2h-3z" fill="#333" /></Svg></VBtn>
                </div>
                <div className="ml-[14px] flex gap-[2px]">
                    <VBtn><Svg w={15} h={11}><path d="M0 0h3v2H0zM0 4.500h3v2H0zM0 9h3v2H0z" fill="#333" /><path d="M5 1h10M5 5.500h10M5 10h10" stroke="#777" strokeWidth="1.300" /></Svg></VBtn>
                    <VBtn><Svg w={17} h={13}><path d="M4 3h9q3 0 3 3M13 10H4q-3 0-3-3" stroke="#333" strokeWidth="1.800" /><path d="M12 0l3 3-3 3zM5 7l-3 3 3 3z" fill="#333" /></Svg></VBtn>
                    <VBtn active><Svg w={17} h={13}><path d="M0 3h3q3 0 5 3.500T13 10h1M0 10h3q3 0 5-3.500T13 3h1" stroke="#234" strokeWidth="1.800" /><path d="M13 0l4 3-4 3zM13 7l4 3-4 3z" fill="#234" /></Svg></VBtn>
                </div>
                <div className="ml-auto flex items-end mr-[2px] h-[22px]">
                    <Svg w={14} h={14} className="mb-[-1px] mr-[5px]">
                        <path d="M1 5h3l4-4v12L4 9H1z" stroke="#666" />
                        <path d="M10 4q2 3 0 6" stroke="#2e6ea8" />
                    </Svg>
                    <div className="relative w-[80px] h-[21px]">
                        <svg width="80" height="21" className="absolute inset-0">
                            <defs>
                                <linearGradient id="vol" x1="0" x2="1" y1="0" y2="0">
                                    <stop offset="0" stopColor="#7fd67f" />
                                    <stop offset="0.6" stopColor="#1fc41f" />
                                    <stop offset="0.78" stopColor="#1fc41f" />
                                    <stop offset="0.87" stopColor="#f2b21d" />
                                    <stop offset="1" stopColor="#f0641a" />
                                </linearGradient>
                            </defs>
                            <path d="M.5 20.500L79.500.5v20z" fill="url(#vol)" stroke="#777" />
                        </svg>
                        <span className="absolute left-[6px] top-[0px] text-[9.500px] leading-none text-[#555]">120%</span>
                    </div>
                </div>
            </div>
        </div>
    );
}

export default function App() {
    const menu = ['Media', 'Playback', 'Audio', 'Video', 'Subtitle', 'Tools', 'View', 'Help'];
    return (
        <div className="w-[1280px] h-[800px] overflow-hidden bg-black">
            <div className={`h-[26px] bg-white flex items-center pl-[8px] gap-[17px] text-[14.500px] text-[#111a2c] ${segoe}`}>
                {menu.map((m) => <span key={m}>{m}</span>)}
            </div>
            <div className="h-[20px]" />
            <PptWindow />
            <div className="h-[20px]" />
            <Player />
        </div>
    );
}
